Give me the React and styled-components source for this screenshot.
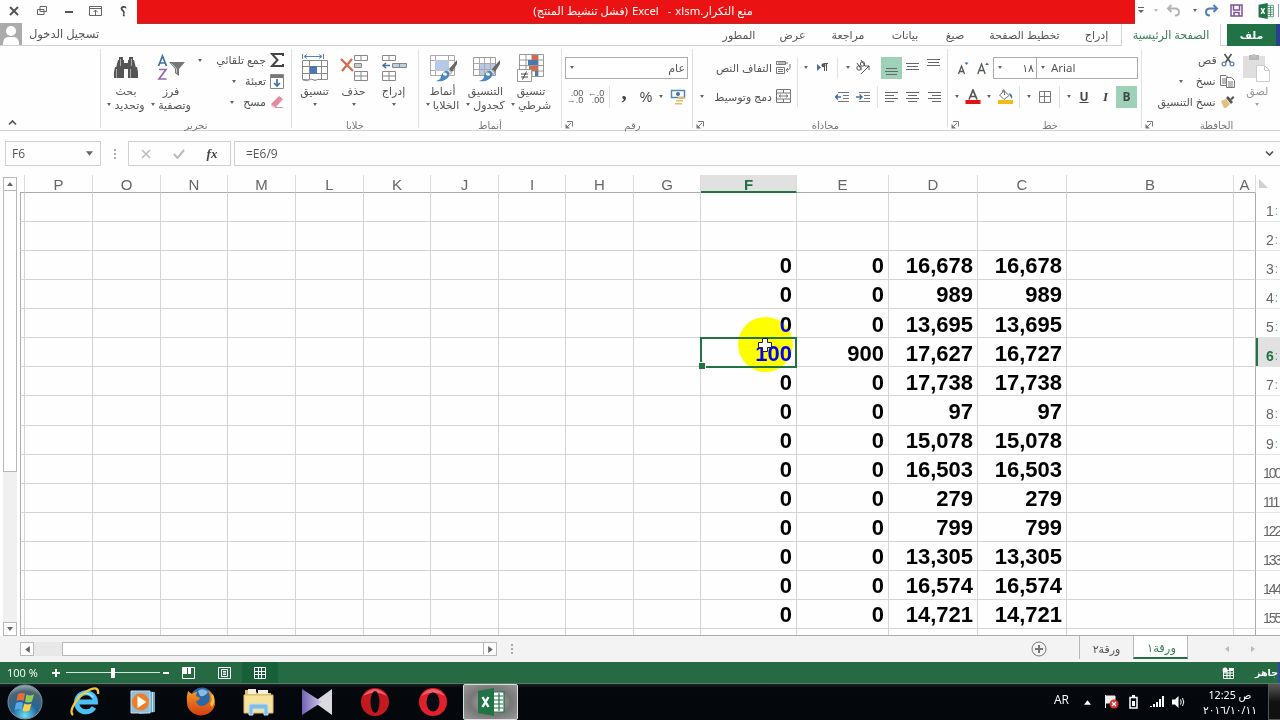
import React from 'react'
import styled, { createGlobalStyle, css } from 'styled-components'

const GlobalStyle = createGlobalStyle`
    * {
        box-sizing: border-box;
    }
    body {
        margin: 0;
        background: #fff;
        overflow: hidden;
    }
    svg {
        display: block;
        flex: none;
    }
`

const Window = styled.div`
    display: flex;
    flex-direction: column;
    width: 1280px;
    height: 720px;
    overflow: hidden;
    background: #fefefe;
    color: #555;
    font-family: 'Open Sans', 'DejaVu Sans', sans-serif;
    font-size: 11px;
    white-space: nowrap;
`

const Arabic = styled.span`
    direction: rtl;
    font-family: 'Noto Sans', 'DejaVu Sans', sans-serif;
    font-size: ${(props) => props.$size || 11}px;
    color: ${(props) => props.$color || '#555'};
    font-weight: ${(props) => (props.$bold ? 700 : 400)};
    line-height: 14px;
`

/* fixed width place for an icon or a label inside a bar */
const Slot = styled.span`
    display: flex;
    flex: none;
    align-items: ${(props) => props.$valign || 'center'};
    justify-content: ${(props) => props.$align || 'center'};
    width: ${(props) => props.$w}px;
    height: ${(props) => (props.$h ? `${props.$h}px` : 'auto')};
    background: ${(props) => (props.$on ? '#9fd0b8' : 'transparent')};
`

const Caret = styled.i`
    flex: none;
    width: 0;
    height: 0;
    border: 2.5px solid transparent;
    border-top: 3px solid ${(props) => props.$color || '#666'};
    border-bottom: 0;
`

/* title bar */

const TitleBar = styled.header`
    display: flex;
    height: 24px;
`

const WindowButtons = styled.div`
    display: flex;
    width: 137px;
    height: 21px;
`

const Title = styled.div`
    display: flex;
    align-items: center;
    justify-content: center;
    gap: 4px;
    flex: 1;
    padding-left: 14px;
    background: #ea1212;
    border-bottom: 1px solid #a33;
    direction: rtl;
`

const QuickAccess = styled.div`
    display: flex;
    align-items: center;
    width: 145px;
    height: 21px;
`

/* tabs */

const TabBar = styled.nav`
    display: flex;
    height: 22px;
    border-bottom: 1px solid #d4d4d4;
`

const Account = styled.div`
    display: flex;
    align-items: center;
    gap: 7px;
    width: 712px;
`

const Tab = styled.div`
    display: flex;
    align-items: center;
    justify-content: center;
    width: ${(props) => props.$w}px;
    height: 22px;
    ${(props) => props.$active && css`
        margin-right: 6px;
        background: #fefefe;
        border: 1px solid #d4d4d4;
        border-width: 0 1px;
    `}
    ${(props) => props.$file && css`
        background: #217346;
        border-right: 4px solid #29418c;
    `}
`

/* ribbon */

const Ribbon = styled.div`
    display: flex;
    height: 86px;
    border-bottom: 1px solid #d4d4d4;
`

const Collapse = styled.div`
    display: flex;
    align-items: flex-end;
    width: 100px;
    padding: 0 0 4px 8px;
`

const Group = styled.section`
    display: flex;
    flex-direction: column;
    width: ${(props) => props.$w}px;
    height: 79px;
    margin-top: 3px;
    border-left: 1px solid #e1e1e1;
`

const GroupBody = styled.div`
    display: flex;
    flex: none;
    height: 67px;
    padding-left: ${(props) => props.$pad || 0}px;
`

const GroupFooter = styled.div`
    display: flex;
    flex: none;
    align-items: center;
    justify-content: center;
    height: 18px;
    padding-left: ${(props) => (props.$launcher ? 3 : 0)}px;
    > span {
        flex: 1;
        text-align: center;
    }
`

const BigButton = styled.div`
    display: flex;
    flex-direction: column;
    align-items: center;
    width: ${(props) => props.$w}px;
    padding-top: 4px;
    opacity: ${(props) => (props.$dim ? 0.6 : 1)};
`

const BigIcon = styled.div`
    display: flex;
    align-items: center;
    height: 30px;
    margin-bottom: 1px;
`

const CaretLine = styled.div`
    display: flex;
    align-items: center;
    gap: 3px;
    height: 14px;
`

const Stack = styled.div`
    display: flex;
    flex-direction: column;
    width: ${(props) => props.$w}px;
    padding-top: 1px;
`

const SmallButton = styled.div`
    display: flex;
    align-items: center;
    justify-content: flex-end;
    height: 21px;
    gap: 4px;
`

const Rows = styled.div`
    display: flex;
    flex-direction: column;
    padding-top: 8px;
    gap: 7px;
`

const ToolRow = styled.div`
    display: flex;
    align-items: center;
    height: 22px;
`

const Rule = styled.i`
    width: 1px;
    height: ${(props) => props.$h || 22}px;
    background: #e1e1e1;
`

const Combo = styled.div`
    display: flex;
    align-items: center;
    justify-content: space-between;
    width: ${(props) => props.$w}px;
    height: 22px;
    margin-right: ${(props) => (props.$joined ? -1 : 0)}px;
    padding: 0 2px 0 4px;
    border: 1px solid #ababab;
    background: #fff;
`

const Letter = styled.b`
    font: ${(props) => props.$font};
    color: #444;
    text-decoration: ${(props) => (props.$under ? 'underline' : 'none')};
`

const Decimals = styled.div`
    font-family: 'Liberation Sans', sans-serif;
    font-size: 9px;
    line-height: 7px;
    text-align: right;
    b {
        color: #41719c;
        font-weight: 700;
    }
`

/* formula bar */

const FormulaBar = styled.div`
    display: flex;
    align-items: flex-start;
    height: 44px;
    padding: 10px 0 0 5px;
    font-size: 12px;
`

const Field = styled.div`
    display: flex;
    align-items: center;
    justify-content: space-between;
    width: ${(props) => props.$w}px;
    height: 25px;
    padding: 0 7px 0 6px;
    border: 1px solid #d0d0d0;
    ${(props) => props.$grow && css`
        flex: 1;
        margin-left: 3px;
        padding: 0 4px 0 11px;
        border-right: 0;
    `}
`

const Dots = styled.div`
    display: flex;
    flex-direction: column;
    align-items: center;
    justify-content: center;
    gap: 2px;
    width: ${(props) => props.$w}px;
    height: ${(props) => props.$h}px;
    i {
        width: 2px;
        height: 2px;
        background: #aaa;
    }
`

/* sheet */

const Body = styled.main`
    display: flex;
    height: 461px;
`

const VScroll = styled.div`
    display: flex;
    flex-direction: column;
    width: 14px;
    height: 459px;
    margin: 2px 3px 0;
    background: #f0f0f0;
`

const ScrollButton = styled.div`
    display: flex;
    flex: none;
    align-items: center;
    justify-content: center;
    width: 14px;
    height: 14px;
    border: 1px solid #b8b8b8;
    background: #fff;
`

const VThumb = styled.div`
    height: 281px;
    border: 1px solid #b8b8b8;
    border-top: 0;
    background: #fff;
`

const Sheet = styled.div`
    display: grid;
    grid-template-columns: 5px 68px 68px 67px 68px 68px 67px 68px 67px 68px 67px 96px 92px 89px 89px 167px 22px 24px;
    grid-template-rows: 18px repeat(15, 29.07px) 7px;
    width: 1260px;
    height: 461px;
    overflow: hidden;
    border-bottom: 1px solid #ababab;
`

const ColumnHead = styled.div`
    display: flex;
    align-items: center;
    justify-content: center;
    height: 18px;
    border-right: 1px solid #dcdcdc;
    border-bottom: 1px solid #ababab;
    font: 15px 'Liberation Sans', sans-serif;
    color: #666;
    padding-top: 2px;
    ${(props) => props.$active && css`
        background: #e1e1e1;
        border-bottom: 2px solid #217346;
        color: #217346;
        font-weight: 700;
        padding-top: 3px;
    `}
`

const Corner = styled.div`
    display: flex;
    align-items: flex-end;
    padding: 0 0 4px 2px;
`

const Cell = styled.div`
    position: relative;
    display: flex;
    align-items: center;
    justify-content: flex-end;
    padding: ${(props) => (props.$first ? '0' : '2.500px 4px 0 0')};
    border-right: 1px solid ${(props) => (props.$edge ? '#ababab' : '#d4d4d4')};
    border-bottom: 1px solid #d4d4d4;
    border-left: ${(props) => (props.$first ? '1px solid #ababab' : '0')};
    font: 700 22px 'Liberation Sans', sans-serif;
    color: #000;
`

const RowHead = styled.div`
    display: flex;
    align-items: center;
    padding: 8px 0 0 ${(props) => (props.$wide ? 7 : 10)}px;
    border-bottom: 1px solid #e4e4e4;
    font: 14px 'Liberation Sans', sans-serif;
    letter-spacing: ${(props) => (props.$wide ? -2 : 0)}px;
    color: #666;
    ${(props) => props.$active && css`
        background: #e1e1e1;
        box-shadow: inset 2px 0 #217346;
        color: #217346;
        font-weight: 700;
    `}
`

const Echo = styled.span`
    margin-left: 1px;
    font-size: 12px;
    font-weight: 400;
    color: #5aa9a9;
`

const Selection = styled.div`
    position: absolute;
    inset: -1px -1px -2px -1px;
    z-index: 3;
    border: 2px solid #217346;
    &::after {
        content: '';
        position: absolute;
        left: -3px;
        bottom: -3px;
        width: 6px;
        height: 6px;
        background: #217346;
        border: 1px solid #fff;
        border-width: 1px 1px 0 0;
    }
`

/* difference with blue turns white to yellow and black to blue */
const Spot = styled.div`
    position: absolute;
    left: 37px;
    top: -21px;
    z-index: 2;
    width: 55px;
    height: 55px;
    border-radius: 50%;
    background: #0000ff;
    mix-blend-mode: difference;
`

const Pointer = styled.div`
    position: absolute;
    left: 56px;
    top: -1px;
    z-index: 4;
`

/* sheet tabs */

const SheetBar = styled.div`
    display: flex;
    align-items: center;
    height: 26px;
    padding-left: 20px;
    background: #f3f3f3;
`

const HScroll = styled.div`
    display: flex;
    width: 477px;
    height: 14px;
    background: #e8e8e8;
`

const HThumb = styled.div`
    width: 423px;
    margin-left: 28px;
    border: 1px solid #b8b8b8;
    border-right: 0;
    background: #fff;
`

const SheetTab = styled.div`
    display: flex;
    align-items: center;
    justify-content: center;
    align-self: flex-start;
    width: ${(props) => props.$w}px;
    height: 23px;
    padding-top: 2px;
    border-left: 1px solid #b8b8b8;
    ${(props) => props.$active && css`
        background: #fff;
        padding-left: 2px;
        border-right: 1px solid #b8b8b8;
        border-bottom: 2px solid #217346;
    `}
`

/* status bar */

const StatusBar = styled.div`
    display: flex;
    align-items: center;
    height: 22px;
    background: #266a43;
    border-bottom: 1px solid #5d7a69;
    color: #fff;
`

const Percent = styled.span`
    width: 46px;
    padding-left: 7px;
`

const ZoomTrack = styled.div`
    display: flex;
    align-items: center;
    justify-content: center;
    width: 94px;
    height: 10px;
    background: linear-gradient(#d5e5db, #d5e5db) center / 100% 1px no-repeat;
    i {
        width: 4px;
        height: 10px;
        background: #fff;
    }
`

const ViewButton = styled.div`
    display: flex;
    align-items: center;
    justify-content: center;
    width: 35.500px;
    height: 21px;
    background: ${(props) => (props.$on ? '#17603a' : 'transparent')};
`

const Ready = styled.div`
    display: flex;
    align-items: center;
    justify-content: flex-end;
    flex: 1;
    height: 21px;
    border-right: 2px solid #3148a0;
`

/* taskbar */

const TaskBar = styled.footer`
    display: flex;
    align-items: center;
    height: 36px;
    background: linear-gradient(#1b2126, #05080d 4px, #04070c);
    color: #fff;
`

const TaskButton = styled.div`
    display: flex;
    flex: none;
    align-items: center;
    justify-content: center;
    width: ${(props) => props.$w || 58}px;
    height: 36px;
    ${(props) => props.$active && css`
        border: 1px solid #ddd;
        border-radius: 2px;
        background: radial-gradient(#b8b8b8, #777 55%, #999);
    `}
`

const Language = styled.span`
    width: 25px;
    padding-bottom: 5px;
    font-size: 12px;
    text-align: center;
`

const Clock = styled.div`
    display: flex;
    flex-direction: column;
    align-items: center;
    width: 72px;
    line-height: 15px;
    gap: 1px;
`

const ShowDesktop = styled.div`
    flex: 1;
    height: 36px;
    border: 1px solid #555;
    border-right: 0;
    background: linear-gradient(#555, #111 50%);
`

const Lines = ({ widths, align, gap = 3 }) => (
    <svg width="14" height="12" viewBox="0 0 14 12">
        {widths.map((w, i) => (
            <rect key={i} x={align === 'right' ? 14 - w : align === 'left' ? 0 : Math.floor((14 - w) / 2)}
                y={1 + i * gap} width={w} height="1" fill="#666" />
        ))}
    </svg>
)

const Launcher = () => (
    <svg width="8" height="8" fill="none" stroke="#777">
        <path d="M2 .5h5.500v5M6 2L2 6" />
        <path d="M.5 3v4.500H5z" fill="#777" stroke="none" />
    </svg>
)

const Chevron = ({ up }) => (
    <svg width="9" height="7" fill="none" stroke="#555" strokeWidth="1.700">
        <path d={up ? 'M1 5.500L4.500 2 8 5.500' : 'M1 1.500L4.500 5 8 1.500'} />
    </svg>
)

const Footer = ({ launcher, children }) => (
    <GroupFooter $launcher={launcher}>
        {launcher && <Launcher />}
        <Arabic $size={10} $color="#777">{children}</Arabic>
    </GroupFooter>
)

const Big = ({ w, icon, top, bottom, dim }) => (
    <BigButton $w={w} $dim={dim}>
        <BigIcon>{icon}</BigIcon>
        <Arabic>{top}</Arabic>
        <CaretLine>
            <Caret />
            {bottom && <Arabic>{bottom}</Arabic>}
        </CaretLine>
    </BigButton>
)

const Small = ({ icon, children, caret }) => (
    <SmallButton>
        {caret && <><Caret /><Slot $w={caret} /></>}
        <Arabic>{children}</Arabic>
        {icon}
    </SmallButton>
)

const Binoculars = () => (
    <svg width="26" height="26" fill="#555">
        <path d="M6 2h4v3h1v8H3l2-8h1zM16 2h4v3h1l2 8h-8V5h1z" />
        <path d="M2 12h9v11H1v-6zM15 12h9l1 5v6H15zM11 8h4v6h-4z" />
        <path d="M3.500 14v9M17.500 14v9M7.500 4v7M18.500 4v7" stroke="#aaa" />
    </svg>
)

const SortFilter = () => (
    <svg width="28" height="28" fill="none" strokeWidth="1.700">
        <path d="M1.500 12L5.500 2l4 10M3 9h5" stroke="#41719c" />
        <path d="M2 15.500h7L2 25h7.500" stroke="#9467ae" />
        <path d="M12 8h16l-6 7v7l-4-3v-4z" fill="#777" />
        <path d="M14.500 9.500l5 5.500v4" stroke="#ccc" strokeWidth="1" />
    </svg>
)

const Sigma = () => (
    <svg width="14" height="14" fill="none" stroke="#444" strokeWidth="2">
        <path d="M13 3V1H2l5.500 6L2 13h11v-2" />
    </svg>
)

const Fill = () => (
    <svg width="14" height="15" fill="none">
        <path d="M.5.500h13v14H.5z" stroke="#888" fill="#fff" />
        <path d="M1 1h12v3H1z" fill="#777" />
        <path d="M7 5v7M4 9l3 3 3-3" stroke="#41719c" strokeWidth="1.700" />
    </svg>
)

const Eraser = () => (
    <svg width="14" height="13">
        <path d="M1 8L9 0l4 3-7 8H3z" fill="#e58aa0" />
        <path d="M1 8l4 3-1 1-3-2z" fill="#f4c3cc" />
        <path d="M5 11.500h8" stroke="#aaa" />
    </svg>
)

const CellsFormat = () => (
    <svg width="28" height="30" fill="#fff" stroke="#888">
        <path d="M1.500 7.500h25v19h-25zM8.500 7.500v19M20.500 7.500v19M1.500 13.500h25M1.500 20.500h25" />
        <path d="M9 13h7v8H9z" fill="#4a78b0" stroke="none" />
        <path d="M1.500 1v5M22.500 1v5M4 3.500h16M6 1.500l-3 2 3 2M18 1.500l3 2-3 2" fill="none" stroke="#5685b5" />
        <path d="M2 27q5 2 8-1 4 3 8 0" />
    </svg>
)

const CellsDelete = () => (
    <svg width="28" height="28" fill="#fff" stroke="#888">
        <path d="M14.500 1.500h13v5h-13zM21 1.500v5M14.500 17.500h13v9h-13zM21 17.500v9M14.500 22h13" />
        <path d="M14.500 9.500h7v4h-7z" fill="#ccc" />
        <path d="M1 5l12 12M12 5L2 17" stroke="#d3694d" strokeWidth="2.200" />
    </svg>
)

const CellsInsert = () => (
    <svg width="26" height="28" fill="#fff" stroke="#888">
        <path d="M1.500 1.500h13v5h-13zM8 1.500v5M1.500 17.500h13v9h-13zM8 17.500v9M1.500 22h13" />
        <path d="M11.500 9.500h14v4h-14zM18.500 9.500v4" fill="#bfcde4" />
        <path d="M9 11.500H2M5 9l-3 2.500L5 14" fill="none" stroke="#41719c" strokeWidth="1.500" />
    </svg>
)

const Brush = () => (
    <>
        <path d="M28 6l-8 9 3 3 5-8z" fill="#666" stroke="none" />
        <path d="M19 15l4 4-2 1-4-3z" fill="#ddd" stroke="#888" strokeWidth=".5" />
        <path d="M17 17c3 0 4 2 3 5-2 4-7 6-13 5 4-1 5-3 5-5 1-3 3-5 5-5z" fill="#4a88bd" stroke="none" />
        <path d="M14 19c2-1 4 0 4 2-1 1-2 1-4 0z" fill="#fff" stroke="none" />
    </>
)

const CellStyles = () => (
    <svg width="28" height="28" fill="#fff" stroke="#999">
        <path d="M1.500 1.500h24v20h-24zM6.500 1.500v20M19.500 1.500v20M1.500 6.500h24M1.500 16.500h24" stroke="#aaa" />
        <path d="M6 6h14v11H6z" fill="#b9c8e3" stroke="none" />
        <Brush />
    </svg>
)

const TableFormat = () => (
    <svg width="28" height="28" fill="#fff">
        <path d="M1.500 3.500h22v18h-22z" stroke="#999" />
        <path d="M7 9h16v12H7z" fill="#b9c8e3" />
        <path d="M1.500 9.500h22M1.500 15.500h22M7.500 4v17M12.500 4v17M18.500 4v17" stroke="#aaa" />
        <Brush />
    </svg>
)

const Conditional = () => (
    <svg width="28" height="29" fill="#fff" stroke="#999">
        <path d="M2.500 1.500h24v22h-24zM2.500 7h24M2.500 12.500h24M2.500 18h24M9 1.500v22M15 1.500v22M21 1.500v22" />
        <path d="M15 2h6v5h-6zM15 13h6v5h-9v-5z" fill="#d3694d" stroke="none" />
        <path d="M11 7h10v5H11zM18 18h3v5h-3z" fill="#4a78b0" stroke="none" />
        <path d="M.5 16.500h14v12H.5z" />
        <path d="M4 21h7M4 24h7M9.500 18.500l-4 8" stroke="#444" />
    </svg>
)

const Money = () => (
    <svg width="16" height="16">
        <path d="M1.500 1.500h13v7h-13z" fill="#fff" stroke="#5685b5" strokeWidth="1.500" />
        <circle cx="8" cy="5" r="2" fill="#41719c" />
        <path d="M8 8h7v2H8zM6 11h7v1.500H6zM5 14h7v1.500H5z" fill="#e6b965" />
    </svg>
)

const WrapText = () => (
    <svg width="16" height="15" fill="none" stroke="#777">
        <path d="M1.500 1.500h9v3h-9zM1.500 7.500h8v6h-8zM3 9.500h5M3 11.500h5M3 3h10M15 4v4q0 2-4 2M13 8l-2 2 2 2" />
    </svg>
)

const Merge = () => (
    <svg width="15" height="15" fill="#fff" stroke="#777">
        <path d="M.5.500h14v13H.5zM.5 4h14M.5 10h14M7.500.500V4M7.500 10v3.500M3 7h9M5 5.500L3 7l2 1.500M10 5.500L12 7l-2 1.500" />
    </svg>
)

const RightToLeft = () => (
    <svg width="14" height="11">
        <path d="M2 2l4 3.500L2 9z" fill="#41719c" />
        <path d="M9 1.500h4M9.500 1v8M11.500 1v8" stroke="#555" fill="none" />
        <circle cx="8.500" cy="3.300" r="2" fill="#555" />
    </svg>
)

const Orientation = () => (
    <svg width="17" height="17" fill="none" stroke="#555">
        <circle cx="5" cy="9" r="2.200" />
        <path d="M3 4l4.500 6.500" />
        <circle cx="8.500" cy="5" r="2.200" />
        <path d="M7 1l4 6M7 15l8-8M15 11V7h-4" />
    </svg>
)

const Indent = ({ out }) => (
    <svg width="15" height="12" fill="none" stroke="#777">
        <path d="M3 1.500h11M8 4.500h6M8 7.500h6M3 10.500h11" />
        <path d={out ? 'M0 6h6M3 3.500L.5 6 3 8.500' : 'M0 6h6M3.500 3.500L6 6 3.500 8.500'} stroke="#41719c" strokeWidth="1.400" />
    </svg>
)

const GrowLetter = ({ up }) => (
    <svg width="12" height="14" fill="none" stroke="#555" strokeWidth="1.300">
        <path d={up ? 'M.8 13L4.500 3l3.700 10M2 9.500h5' : 'M1.500 13l3-8 3 8M2.500 10.500h4'} />
        <path d={up ? 'M8 4l2-2.500L12 4z' : 'M7.500 1.500h4L9.500 4z'} fill="#41719c" stroke="none" />
    </svg>
)

const FontColour = () => (
    <svg width="16" height="16" fill="none">
        <path d="M4 10.500L8 1l4 9.500M5.500 7.500h5" stroke="#555" strokeWidth="1.700" />
        <path d="M.5 11h15v4H.5z" fill="#e31313" />
    </svg>
)

const Bucket = () => (
    <svg width="17" height="16" fill="#fff" stroke="#777">
        <path d="M7.500 2L12 6.500 7 10.500 2.500 6z M7.500 6V1q-2-1-2 2" />
        <path d="M12 4q4 1 3 6l-2-3z" fill="#41719c" stroke="none" />
        <path d="M1 11h15v4H1z" fill="#f0bd16" stroke="none" />
    </svg>
)

const Borders = () => (
    <svg width="12" height="12" fill="none" stroke="#777">
        <path d="M.5.500h11v11H.5zM5.500.500v11M.5 5.500h11" />
    </svg>
)

const Scissors = () => (
    <svg width="14" height="14" fill="none" stroke="#555" strokeWidth="1.700">
        <path d="M3.500 1l6 8.500M10.500 1l-6 8.500" />
        <circle cx="3" cy="11" r="1.900" stroke="#5c83b0" strokeWidth="1.200" />
        <circle cx="11" cy="11" r="1.900" stroke="#5c83b0" strokeWidth="1.200" />
    </svg>
)

const CopyPages = () => (
    <svg width="15" height="13" fill="#fff" stroke="#777">
        <path d="M.5.500H6L8.500 3v7.500h-8zM2 4h4M2 6h4M2 8h4" />
        <path d="M6.500 2.500h5l3 3v7h-8zM8 7h5M8 9h5M8 11h5" />
    </svg>
)

const Painter = () => (
    <svg width="15" height="14">
        <path d="M1 6l5-2 4 5-4 4H4z" fill="#e3bd7d" />
        <path d="M6 3l5 6 2-2-5-6z" fill="#555" />
        <path d="M10 4l3-3 1.500 1.500L12 5z" fill="#555" />
    </svg>
)

const Paste = () => (
    <svg width="28" height="28">
        <path d="M0 2h22v22H0z" fill="#ccc" />
        <path d="M6 1h10v5H6z" fill="#888" />
        <circle cx="11" cy="2" r="2" fill="#999" />
        <path d="M13.500 11.500h8l5 5v11h-13z" fill="#fff" stroke="#aaa" />
        <path d="M21.500 11.500v5h5" fill="none" stroke="#aaa" />
    </svg>
)

const ExcelLogo = ({ size = 16 }) => (
    <svg width={size} height={size} viewBox="0 0 28 28">
        <path d="M15 4h12v20H15z" fill="#fff" stroke="#217346" strokeWidth="1.200" />
        <path d="M17 8h9M17 12h9M17 16h9M17 20h9M22 5v18" stroke="#217346" strokeWidth="1.200" />
        <path d="M1 3l16-3v28L1 25z" fill="#217346" />
        <path d="M5.500 9l6 10M11.500 9l-6 10" stroke="#fff" strokeWidth="2.400" />
    </svg>
)

const Undo = ({ color, flip }) => (
    <svg width="15" height="13" viewBox="0 0 15 13" fill="none" stroke={color} strokeWidth="2">
        <g transform={flip ? 'translate(15 0) scale(-1 1)' : undefined}>
            <path d="M5.500 1L2 4.500 5.500 8M2 4.500h7q4 0 4 3.500t-4 3.500" />
        </g>
    </svg>
)

const Save = () => (
    <svg width="13" height="13" fill="none" stroke="#7b5497" strokeWidth="1.500">
        <path d="M1 1h11v11H1zM3.500 1v5h6V1M4 12V8.500h5V12" />
    </svg>
)

const Avatar = () => (
    <svg width="22" height="22">
        <path d="M0 0h22v22H0z" fill="#ababab" />
        <circle cx="11" cy="8" r="5" fill="#fff" />
        <path d="M3 22q0-8 5-8h6q5 0 5 8z" fill="#fff" />
    </svg>
)

const triangles = {
    up: 'M0 5h6L3 1z',
    down: 'M0 1h6L3 5z',
    left: 'M5 0v6L1 3z',
    right: 'M1 0v6l4-3z',
}

const Tri = ({ dir, color = '#666', size = 6 }) => (
    <svg width={size} height={size} viewBox="0 0 6 6" fill={color}>
        <path d={triangles[dir]} />
    </svg>
)

const Orb = () => (
    <svg width="36" height="36" viewBox="0 0 36 36">
        <defs>
            <radialGradient id="orb" cx="50%" cy="90%" r="95%">
                <stop offset="0" stopColor="#6fe0f5" />
                <stop offset=".4" stopColor="#20659a" />
                <stop offset=".75" stopColor="#4a6472" />
                <stop offset="1" stopColor="#b4c1c8" />
            </radialGradient>
        </defs>
        <circle cx="18" cy="18" r="17" fill="url(#orb)" stroke="#7d93a0" />
        <path d="M11 10q4-2 7 0l-1.500 7q-3-2-7 0z" fill="#ee6a35" />
        <path d="M19.500 10.500q3 2 7.500 0l-2 7q-4 2-7 0z" fill="#98cb4a" />
        <path d="M9 19q4-2 7 0l-1.500 7q-3-2-7 0z" fill="#54a8e6" />
        <path d="M17.500 19.500q3 2 7 0l-2 7q-4 2-7 0z" fill="#fbd045" />
    </svg>
)

const Explorer = () => (
    <svg width="32" height="32" viewBox="0 0 32 32" fill="none">
        <path d="M25 21.500A9.500 9.500 0 1 1 26.500 16H9" stroke="#4cc0f2" strokeWidth="5" />
        <path d="M24 11A9.500 9.500 0 0 0 8 13" stroke="#a3e5fb" strokeWidth="1.500" />
        <path d="M4 29C-1 25 9 9 20 4c6-3 10-2 9 4" stroke="#f4c835" strokeWidth="2.300" />
    </svg>
)

const MediaPlayer = () => (
    <svg width="26" height="26">
        <path d="M9 2l16 1v20L9 25z" fill="#6ba3c7" />
        <path d="M22.500 3v20" stroke="#cbe4f1" />
        <path d="M1 2h19v22H1z" fill="#8fbedb" stroke="#c4dfed" />
        <circle cx="10.500" cy="13" r="8.500" fill="#ee7d27" />
        <path d="M7.500 7v12l9-6z" fill="#fff" />
    </svg>
)

const Firefox = () => (
    <svg width="32" height="32">
        <defs>
            <linearGradient id="fox" x2="0" y2="1">
                <stop offset="0" stopColor="#f59b22" />
                <stop offset="1" stopColor="#d33d12" />
            </linearGradient>
        </defs>
        <circle cx="17" cy="13" r="11.500" fill="#2f66a6" />
        <path d="M13 5q5-4 10 1-3 5-8 4z" fill="#84bde2" />
        <path d="M3 5l4 3q2-2 5-2l-1 4 4 2q-1 3-4 3 1 5 6 5 8-1 8-9 0-4-3-7 8 4 8 12a14 13 0 0 1-28 1Q1 11 3 5z" fill="url(#fox)" />
        <path d="M28 8q3 8-1 13l-2-3q3-4 1-8z" fill="#f9c33b" />
    </svg>
)

const Folder = () => (
    <svg width="32" height="30">
        <path d="M2 3h10l2 3h14v20H2z" fill="#e0c06b" />
        <path d="M5 2h8v5H5zM15 3h10v4H15z" fill="#f3f0df" />
        <path d="M1 8h29v18H1z" fill="#f6e29b" stroke="#d9bd6c" />
        <path d="M6 28V19q0-2 2-2h15q2 0 2 2v9h-4v-6H10v6z" fill="#83bde6" stroke="#bfe0f4" />
    </svg>
)

const Km = () => (
    <svg width="32" height="28">
        <defs>
            <linearGradient id="km">
                <stop offset="0" stopColor="#7260b5" />
                <stop offset="1" stopColor="#d2ccea" />
            </linearGradient>
        </defs>
        <path d="M31 1v26L13 14z" fill="#d9d9df" />
        <path d="M1 1v26l20-13z" fill="url(#km)" />
    </svg>
)

const Opera = ({ narrow }) => (
    <svg width="30" height="30">
        <circle cx="15" cy="15" r="14" fill={narrow ? '#c51920' : '#e2202b'} />
        <path d="M3 9Q15-5 27 9 15 2 3 9z" fill="#ef6268" />
        <ellipse cx="15" cy="15" rx={narrow ? 4.5 : 6.5} ry={narrow ? 11 : 9.5} fill="#070a10" />
    </svg>
)

const columns = ['', 'P', 'O', 'N', 'M', 'L', 'K', 'J', 'I', 'H', 'G', 'F', 'E', 'D', 'C', 'B', 'A']

const rows = [
    {},
    {},
    { F: '0', E: '0', D: '16,678', C: '16,678' },
    { F: '0', E: '0', D: '989', C: '989' },
    { F: '0', E: '0', D: '13,695', C: '13,695' },
    { F: '100', E: '900', D: '17,627', C: '16,727' },
    { F: '0', E: '0', D: '17,738', C: '17,738' },
    { F: '0', E: '0', D: '97', C: '97' },
    { F: '0', E: '0', D: '15,078', C: '15,078' },
    { F: '0', E: '0', D: '16,503', C: '16,503' },
    { F: '0', E: '0', D: '279', C: '279' },
    { F: '0', E: '0', D: '799', C: '799' },
    { F: '0', E: '0', D: '13,305', C: '13,305' },
    { F: '0', E: '0', D: '16,574', C: '16,574' },
    { F: '0', E: '0', D: '14,721', C: '14,721' },
    {},
]

/* last digit of the row number runs on at the right edge */
const rowLabels = ['1', '2', '3', '4', '5', '6', '7', '8', '9', '100', '111', '122', '133', '144', '155']

const tabs = [
    ['المطور', 54],
    ['عرض', 53],
    ['مراجعة', 58],
    ['بيانات', 56],
    ['صيغ', 44],
    ['تخطيط الصفحة', 95],
    ['إدراج', 49],
]

const SheetGrid = () => (
    <Sheet>
        {columns.map((c) => <ColumnHead key={c} $active={c === 'F'}>{c}</ColumnHead>)}
        <Corner><svg width="10" height="10"><path d="M1 0v9h9z" fill="#d0d0d0" /></svg></Corner>
        {rows.map((row, r) => {
            const label = rowLabels[r]
            const active = r === 5
            return (
                <React.Fragment key={r}>
                    {columns.map((c) => (
                        <Cell key={c} $first={c === ''} $edge={c === 'A'}>
                            {row[c]}
                            {c === 'F' && active && (
                                <>
                                    <Spot />
                                    <Selection />
                                    <Pointer>
                                        <svg width="16" height="16">
                                            <path d="M5.500 1.500h5v4h4v5h-4v4h-5v-4h-4v-5h4z" fill="#fff" stroke="#222" />
                                        </svg>
                                    </Pointer>
                                </>
                            )}
                        </Cell>
                    ))}
                    <RowHead $wide={label && label.length > 1} $active={active}>
                        {label}
                        {label && label.length === 1 && <Echo>:</Echo>}
                    </RowHead>
                </React.Fragment>
            )
        })}
    </Sheet>
)

const App = () => (
    <Window>
        <GlobalStyle />
        <TitleBar>
            <WindowButtons>
                <Slot $w={28}><svg width="10" height="10" stroke="#555" strokeWidth="2"><path d="M1 1l8 8M9 1L1 9" /></svg></Slot>
                <Slot $w={27}><svg width="10" height="9" fill="#fff" stroke="#666"><path d="M3 .5h6.500v5H3zM.5 3.500h6.500v5H.5z" /></svg></Slot>
                <Slot $w={27}><svg width="8" height="7"><path d="M0 4h8v2H0z" fill="#555" /></svg></Slot>
                <Slot $w={27}><svg width="13" height="10" fill="none" stroke="#666"><path d="M.5.500h12v9H.5zM.5 2.500h12M6.500 9V4M4.500 6l2-2 2 2" /></svg></Slot>
                <Slot $w={28}><Letter $font="700 13px 'Open Sans'">؟</Letter></Slot>
            </WindowButtons>
            <Title>
                <Arabic $color="#fff" $size={11.3}>منع التكرار.xlsm</Arabic>
                <Arabic $color="#fff" $size={11.3}>-</Arabic>
                <Slot $w={1} />
                <Arabic $color="#fff" $size={11.3}>Excel</Arabic>
                <Arabic $color="#fff" $size={11.3}>(فشل تنشيط المنتج)</Arabic>
            </Title>
            <QuickAccess>
                <Slot $w={12}><svg width="6" height="7" fill="#666"><path d="M0 0h6v1H0zM0 3h6L3 6z" /></svg></Slot>
                <Slot $w={18}><Caret $color="#bbb" /></Slot>
                <Slot $w={17}><Undo color="#b5b5b5" /></Slot>
                <Slot $w={25}><Caret /></Slot>
                <Slot $w={8}><Undo color="#4d7ebb" flip /></Slot>
                <Slot $w={43}><Save /></Slot>
                <Slot $w={16}><ExcelLogo /></Slot>
                <Slot $w={6} $align="flex-end"><svg width="2" height="13"><path d="M0 0h1v13H0z" fill="#7fa2d0" /></svg></Slot>
            </QuickAccess>
        </TitleBar>

        <TabBar>
            <Account>
                <Avatar />
                <Arabic $size={11.5}>تسجيل الدخول</Arabic>
            </Account>
            {tabs.map(([name, w]) => <Tab key={name} $w={w}><Arabic>{name}</Arabic></Tab>)}
            <Tab $w={100} $active><Arabic $color="#3d7f5b" $size={11.2}>الصفحة الرئيسية</Arabic></Tab>
            <Tab $w={53} $file><Arabic $color="#fff" $bold $size={10.5}>ملف</Arabic></Tab>
        </TabBar>

        <Ribbon>
            <Collapse><Chevron up /></Collapse>

            <Group $w={191}>
                <GroupBody $pad={2}>
                    <Big w={46} icon={<Binoculars />} top="بحث" bottom="وتحديد" />
                    <Big w={44} icon={<SortFilter />} top="فرز" bottom="وتصفية" />
                    <Stack $w={91}>
                        <Small icon={<Sigma />} caret={6}>جمع تلقائي</Small>
                        <Small icon={<Fill />} caret={1}>تعبئة</Small>
                        <Small icon={<Eraser />} caret={1}>مسح</Small>
                    </Stack>
                </GroupBody>
                <Footer>تحرير</Footer>
            </Group>

            <Group $w={127}>
                <GroupBody $pad={3}>
                    <Big w={39} icon={<CellsFormat />} top="تنسيق" />
                    <Big w={39} icon={<CellsDelete />} top="حذف" />
                    <Big w={41} icon={<CellsInsert />} top="إدراج" />
                </GroupBody>
                <Footer>خلايا</Footer>
            </Group>

            <Group $w={143}>
                <GroupBody $pad={2}>
                    <Big w={43} icon={<CellStyles />} top="أنماط" bottom="الخلايا" />
                    <Big w={43} icon={<TableFormat />} top="التنسيق" bottom="كجدول" />
                    <Big w={48} icon={<Conditional />} top="تنسيق" bottom="شرطي" />
                </GroupBody>
                <Footer>أنماط</Footer>
            </Group>

            <Group $w={131}>
                <GroupBody $pad={3}>
                    <Rows>
                        <ToolRow>
                            <Combo $w={123}><Caret /><Arabic>عام</Arabic></Combo>
                        </ToolRow>
                        <ToolRow>
                            <Slot $w={20}><Decimals>.00<br /><b>→</b>.0</Decimals></Slot>
                            <Slot $w={22}><Decimals><b>←</b>.0<br />.00</Decimals></Slot>
                            <Slot $w={5}><Rule /></Slot>
                            <Slot $w={24} $h={22} $valign="flex-start"><Letter $font="700 21px/12px 'Liberation Serif'">,</Letter></Slot>
                            <Slot $w={20}><Letter $font="400 14px 'Liberation Sans'">%</Letter></Slot>
                            <Slot $w={10}><Caret /></Slot>
                            <Slot $w={23}><Money /></Slot>
                        </ToolRow>
                    </Rows>
                </GroupBody>
                <Footer launcher>رقم</Footer>
            </Group>

            <Group $w={255}>
                <GroupBody $pad={4}>
                    <Rows>
                        <ToolRow>
                            <Slot $w={75} $align="flex-end"><Arabic>التفاف النص</Arabic></Slot>
                            <Slot $w={22}><WrapText /></Slot>
                        </ToolRow>
                        <ToolRow>
                            <Slot $w={10}><Caret /></Slot>
                            <Slot $w={65} $align="flex-end"><Arabic>دمج وتوسيط</Arabic></Slot>
                            <Slot $w={22}><Merge /></Slot>
                        </ToolRow>
                    </Rows>
                    <Slot $w={7} $h={67}><Rule $h={50} /></Slot>
                    <Rows>
                        <ToolRow>
                            <Slot $w={10}><Caret /></Slot>
                            <Slot $w={22}><RightToLeft /></Slot>
                            <Slot $w={8}><Rule /></Slot>
                            <Slot $w={14}><Caret /></Slot>
                            <Slot $w={14}><Orientation /></Slot>
                            <Slot $w={12} />
                            <Slot $w={21} $h={22} $on $valign="flex-end"><Lines widths={[11, 13, 11]} /></Slot>
                            <Slot $w={21}><Lines widths={[13, 11, 13]} /></Slot>
                            <Slot $w={21} $h={20} $valign="flex-start"><Lines widths={[13, 11, 13]} /></Slot>
                        </ToolRow>
                        <ToolRow>
                            <Slot $w={31} />
                            <Slot $w={20}><Indent out /></Slot>
                            <Slot $w={22}><Indent /></Slot>
                            <Slot $w={7}><Rule /></Slot>
                            <Slot $w={21}><Lines widths={[13, 9, 13, 9]} align="left" /></Slot>
                            <Slot $w={21}><Lines widths={[13, 9, 13, 9]} /></Slot>
                            <Slot $w={21}><Lines widths={[13, 9, 13, 9]} align="right" /></Slot>
                        </ToolRow>
                    </Rows>
                </GroupBody>
                <Footer launcher>محاذاة</Footer>
            </Group>

            <Group $w={194}>
                <GroupBody $pad={4}>
                    <Rows>
                        <ToolRow>
                            <Slot $w={21}><GrowLetter /></Slot>
                            <Slot $w={20}><GrowLetter up /></Slot>
                            <Combo $w={44} $joined><Caret /><Arabic>١٨</Arabic></Combo>
                            <Combo $w={102}>
                                <Caret />
                                <Slot $w={84} $align="flex-start"><Arabic $size={11.5}>Arial</Arabic></Slot>
                            </Combo>
                        </ToolRow>
                        <ToolRow>
                            <Slot $w={10}><Caret /></Slot>
                            <Slot $w={22}><FontColour /></Slot>
                            <Slot $w={10}><Caret /></Slot>
                            <Slot $w={22}><Bucket /></Slot>
                            <Slot $w={6}><Rule /></Slot>
                            <Slot $w={14}><Caret /></Slot>
                            <Slot $w={18}><Borders /></Slot>
                            <Slot $w={10}><Rule /></Slot>
                            <Slot $w={9}><Caret /></Slot>
                            <Slot $w={22}><Letter $font="700 12px 'Open Sans'" $under>U</Letter></Slot>
                            <Slot $w={21}><Letter $font="italic 700 13px 'Liberation Serif'">I</Letter></Slot>
                            <Slot $w={21} $h={22} $on><Letter $font="700 12px 'Open Sans'">B</Letter></Slot>
                        </ToolRow>
                    </Rows>
                </GroupBody>
                <Footer launcher>خط</Footer>
            </Group>

            <Group $w={139}>
                <GroupBody>
                    <Stack $w={94}>
                        <Small icon={<Scissors />}>قص</Small>
                        <Small icon={<CopyPages />} caret={5}>نسخ</Small>
                        <Small icon={<Painter />}>نسخ التنسيق</Small>
                    </Stack>
                    <Big w={46} icon={<Paste />} top="لصق" dim />
                </GroupBody>
                <Footer launcher>الحافظة</Footer>
            </Group>
        </Ribbon>

        <FormulaBar>
            <Field $w={96}>F6<Tri dir="down" size={7} /></Field>
            <Dots $w={27} $h={25}><i /><i /><i /></Dots>
            <Field $w={103}>
                <Slot $w={22}><svg width="10" height="10" stroke="#bbb" strokeWidth="1.500"><path d="M1 1l8 8M9 1L1 9" /></svg></Slot>
                <Slot $w={22}><svg width="12" height="10" fill="none" stroke="#bbb" strokeWidth="2"><path d="M1 5l3.500 4L11 1" /></svg></Slot>
                <Slot $w={22}><Letter $font="italic 700 13px 'Liberation Serif'">fx</Letter></Slot>
            </Field>
            <Field $grow>=E6/9<Slot $w={14}><Chevron /></Slot></Field>
        </FormulaBar>

        <Body>
            <VScroll>
                <ScrollButton><Tri dir="up" /></ScrollButton>
                <VThumb />
                <Slot $w={14} $h={150} />
                <ScrollButton><Tri dir="down" /></ScrollButton>
            </VScroll>
            <SheetGrid />
        </Body>

        <SheetBar>
            <HScroll>
                <ScrollButton><Tri dir="left" size={7} /></ScrollButton>
                <HThumb />
                <ScrollButton><Tri dir="right" size={7} /></ScrollButton>
            </HScroll>
            <Dots $w={30} $h={26}><i /><i /><i /></Dots>
            <Slot $w={503} />
            <Slot $w={18}><svg width="16" height="16" fill="none" stroke="#777"><circle cx="8" cy="8" r="7" /><path d="M4 8h8M8 4v8" strokeWidth="2" /></svg></Slot>
            <Slot $w={31} />
            <SheetTab $w={54}><Arabic $size={11}>ورقة٢</Arabic></SheetTab>
            <SheetTab $w={55} $active><Arabic $size={11.5} $color="#3d7f5b">ورقة١</Arabic></SheetTab>
            <Slot $w={42} $align="flex-end"><Tri dir="left" color="#bbb" /></Slot>
            <Slot $w={26} $align="flex-end"><Tri dir="right" color="#bbb" /></Slot>
        </SheetBar>

        <StatusBar>
            <Percent>100 %</Percent>
            <Slot $w={20}><svg width="8" height="8" stroke="#fff" strokeWidth="2"><path d="M0 4h8M4 0v8" /></svg></Slot>
            <ZoomTrack><i /></ZoomTrack>
            <Slot $w={11}><svg width="6" height="2"><path d="M0 0h6v2H0z" fill="#fff" /></svg></Slot>
            <ViewButton><svg width="13" height="12" fill="none" stroke="#fff"><path d="M.5.500h12v11H.5z" /><path d="M1 1h4v6H1zM6 1h3v6H6z" fill="#fff" stroke="none" /></svg></ViewButton>
            <ViewButton><svg width="13" height="12" fill="none" stroke="#fff"><path d="M.5.500h12v11H.5zM3.500 2.500h6v7h-6zM5 4.500h3M5 6h3M5 7.500h3" /></svg></ViewButton>
            <ViewButton $on><svg width="12" height="12" fill="none" stroke="#fff"><path d="M.5.500h11v11H.5zM4.500.500v11M7.500.500v11M.5 4.500h11M.5 7.500h11" /></svg></ViewButton>
            <Slot $w={943} />
            <Slot $w={16}><svg width="13" height="12" fill="none" stroke="#fff"><path d="M1.500 3.500h10v8h-10zM2 6h9M2 8.500h9M5 4v7M8 4v7" /><circle cx="3" cy="3" r="2.500" fill="#fff" stroke="none" /><path d="M7 1h5v2H7z" fill="#fff" stroke="none" /></svg></Slot>
            <Ready><Arabic $size={9.5} $color="#fff" $bold>جاهز</Arabic></Ready>
        </StatusBar>

        <TaskBar>
            <TaskButton $w={50}><Orb /></TaskButton>
            <Slot $w={6} />
            <TaskButton><Explorer /></TaskButton>
            <TaskButton><MediaPlayer /></TaskButton>
            <TaskButton><Firefox /></TaskButton>
            <TaskButton><Folder /></TaskButton>
            <TaskButton><Km /></TaskButton>
            <TaskButton><Opera narrow /></TaskButton>
            <TaskButton><Opera /></TaskButton>
            <Slot $w={1} />
            <TaskButton $w={55} $active><ExcelLogo size={28} /></TaskButton>
            <Slot $w={531} />
            <Language>AR</Language>
            <Slot $w={27}><Tri dir="up" color="#fff" size={7} /></Slot>
            <Slot $w={20}><svg width="15" height="14"><path d="M1.500 0v13M2 1h9v7H2z" fill="#eee" stroke="#eee" /><circle cx="10" cy="9" r="4.500" fill="#d8302c" /><path d="M8 7l4 4M12 7l-4 4" stroke="#fff" strokeWidth="1.300" /></svg></Slot>
            <Slot $w={25}><svg width="9" height="14" fill="none" stroke="#fff"><path d="M1 2.500h7v10.500H1z" strokeWidth="1.500" /><path d="M3 0h3v2H3zM3 6h3v5H3z" fill="#fff" stroke="none" /></svg></Slot>
            <Slot $w={21}><svg width="14" height="12" fill="#fff"><path d="M0 10h2v1H0zM3 8h2v3H3zM6 6h2v5H6zM9 3h2v8H9zM12 0h2v11h-2z" /></svg></Slot>
            <Slot $w={24}><svg width="14" height="14" fill="none" stroke="#fff"><path d="M0 4.500h3L6.500 1v12L3 9.500H0z" fill="#fff" stroke="none" /><path d="M8.500 4.500q1.500 2.500 0 5M10.500 3q2.500 4 0 8" /></svg></Slot>
            <Slot $w={3} />
            <Clock>
                <Arabic $size={10.7} $color="#fff">ص 12:25</Arabic>
                <Arabic $size={10.7} $color="#fff">٢٠١٦/١٠/١١</Arabic>
            </Clock>
            <Slot $w={2} />
            <ShowDesktop />
        </TaskBar>
    </Window>
)

export default App
